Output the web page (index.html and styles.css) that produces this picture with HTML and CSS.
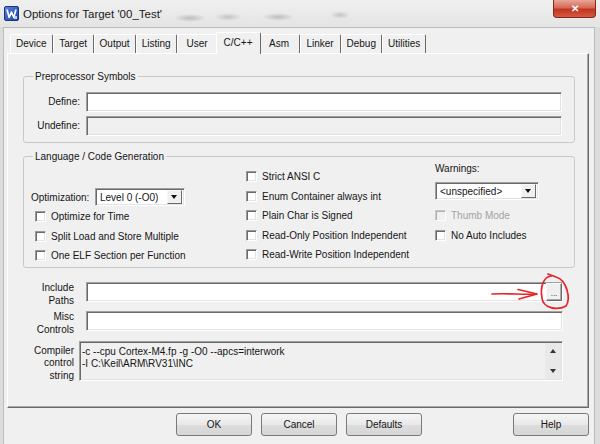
FILE: index.html
```html
<!DOCTYPE html>
<html lang="en">

<head>
    <meta charset="UTF-8">
    <meta name="viewport" content="width=device-width, initial-scale=1.0">
    <title>Options for Target '00_Test'</title>
    <link rel="stylesheet" href="styles.css">
</head>

<body>
    <div class="window">
        <div class="titlebar">
            <svg class="app-icon" viewBox="0 0 15 15">
                <defs>
                    <linearGradient id="ig" x1="0" y1="0" x2="1" y2="1">
                        <stop offset="0" stop-color="#5a86e0" />
                        <stop offset="1" stop-color="#1d3f9e" />
                    </linearGradient>
                </defs>
                <rect x="0.5" y="0.5" width="14" height="14" rx="1.5" fill="url(#ig)" stroke="#1a3580" />
                <path d="M3 3.5 L5.2 11.5 L7.5 6 L9.8 11.5 L12 3.5" fill="none" stroke="#fff" stroke-width="1.6" stroke-linejoin="round" />
                <rect x="10" y="10" width="3" height="3" fill="#bcd0ff" />
            </svg>
            <span class="title">Options for Target '00_Test'</span>
            <div class="close">&#x2715;</div>
        </div>

        <div class="client">
            <div class="tabs">
                <div class="tab">Device</div>
                <div class="tab">Target</div>
                <div class="tab">Output</div>
                <div class="tab">Listing</div>
                <div class="tab">User</div>
                <div class="tab active">C/C++</div>
                <div class="tab">Asm</div>
                <div class="tab">Linker</div>
                <div class="tab">Debug</div>
                <div class="tab">Utilities</div>
            </div>

            <div class="panel">
                <div class="group pre">
                    <span class="group-title">Preprocessor Symbols</span>
                    <div class="sym-grid">
                        <span class="sym-label">Define:</span>
                        <div class="edit"></div>
                        <span class="sym-label">Undefine:</span>
                        <div class="edit disabled"></div>
                    </div>
                </div>

                <div class="group lang">
                    <span class="group-title">Language / Code Generation</span>
                    <div class="lang-grid">
                        <div class="col col1">
                            <div class="opt-row">
                                <span>Optimization:</span>
                                <div class="combo opt"><span>Level 0 (-O0)</span><i class="drop"></i></div>
                            </div>
                            <div class="check"><span class="box"></span>Optimize for Time</div>
                            <div class="check"><span class="box"></span>Split Load and Store Multiple</div>
                            <div class="check"><span class="box"></span>One ELF Section per Function</div>
                        </div>
                        <div class="col col2">
                            <div class="check"><span class="box"></span>Strict ANSI C</div>
                            <div class="check"><span class="box"></span>Enum Container always int</div>
                            <div class="check"><span class="box"></span>Plain Char is Signed</div>
                            <div class="check"><span class="box"></span>Read-Only Position Independent</div>
                            <div class="check"><span class="box"></span>Read-Write Position Independent</div>
                        </div>
                        <div class="col col3">
                            <div class="warn-label">Warnings:</div>
                            <div class="combo warn"><span>&lt;unspecified&gt;</span><i class="drop"></i></div>
                            <div class="check off"><span class="box"></span>Thumb Mode</div>
                            <div class="check"><span class="box"></span>No Auto Includes</div>
                        </div>
                    </div>
                </div>

                <div class="misc-grid">
                    <div class="lbl">Include<br>Paths</div>
                    <div class="edit with-btn"><span class="browse">...</span></div>
                    <div class="lbl">Misc<br>Controls</div>
                    <div class="edit"></div>
                    <div class="lbl compiler">Compiler<br>control<br>string</div>
                    <div class="memo">
                        <div class="memo-text">-c --cpu Cortex-M4.fp -g -O0 --apcs=interwork<br>-I C:\Keil\ARM\RV31\INC</div>
                        <div class="vscroll"><i class="up"></i><i class="down"></i></div>
                    </div>
                </div>
            </div>

            <div class="buttons">
                <button type="button" class="btn">OK</button>
                <button type="button" class="btn">Cancel</button>
                <button type="button" class="btn">Defaults</button>
                <button type="button" class="btn help">Help</button>
            </div>
        </div>

        <!-- red marker drawn over the dialog -->
        <svg class="annotation" viewBox="0 0 100 50">
            <path d="M12 26 C28 25 44 27 56 26" />
            <path d="M38 21.5 L57 26 L39 31" />
            <path d="M71 8 C63 9 60 20 62 30 C63 40 77 43 86 38 C91 31 87 12 76 9 L68 6" />
        </svg>
    </div>
</body>

</html>
```

FILE: styles.css
```css
* {
    box-sizing: border-box;
}

body {
    margin: 0;
    background-color: #dedede;
    font-family: "Liberation Sans", Arial, sans-serif;
    font-size: 10px;
    color: #151515;
}

.window {
    position: relative;
    width: 600px;
    height: 444px;
    overflow: hidden;
    background: #dcdcdc;
}

.titlebar {
    height: 27px;
    display: flex;
    align-items: center;
    padding-left: 4px;
    background:
        radial-gradient(ellipse 16px 4px at 190px 18px, rgba(110, 110, 110, .35), transparent),
        radial-gradient(ellipse 14px 4px at 228px 17px, rgba(110, 110, 110, .3), transparent),
        radial-gradient(ellipse 16px 4px at 278px 17px, rgba(110, 110, 110, .35), transparent),
        radial-gradient(ellipse 10px 4px at 340px 15px, rgba(110, 110, 110, .3), transparent),
        linear-gradient(#f0f0f0, #e4e4e4);
}

.app-icon {
    width: 15px;
    height: 15px;
    margin-right: 4px;
}

.title {
    font-size: 11.5px;
    color: #1a1a1a;
}

.close {
    align-self: flex-start;
    margin-left: auto;
    margin-right: 4px;
    width: 43px;
    height: 18px;
    border: 1px solid #86281b;
    border-top: none;
    border-radius: 0 0 4px 4px;
    background: linear-gradient(#eaa597, #d56a57 45%, #c2341f 55%, #d35a44);
    color: #fff;
    font-size: 10px;
    font-weight: bold;
    line-height: 17px;
    text-align: center;
}

.client {
    margin: 0 5px 0 3px;
    height: 417px;
    background: #f0f0f0;
    border: 1px solid #bcbcbc;
    border-bottom: none;
}

.tabs {
    display: flex;
    align-items: flex-end;
    height: 25px;
    padding-left: 6px;
}

.tab {
    height: 19px;
    min-width: 41px;
    padding: 0 5px;
    line-height: 18px;
    text-align: center;
    border-top: 1px solid #fff;
    border-left: 1px solid #fff;
    border-right: 1px solid #6a6a6a;
    border-radius: 2px 2px 0 0;
    background: #f0f0f0;
}

.tab.active {
    position: relative;
    z-index: 1;
    height: 22px;
    margin: 0 -2px -1px;
    padding: 0 7px;
    line-height: 19px;
}

.panel {
    height: 355px;
    margin: 0 5px 0 3px;
    padding: 0 13px 0 15px;
    border: 1px solid;
    border-color: #fff #6a6a6a #6a6a6a #fff;
    box-shadow: inset -1px -1px 0 #a9a9a9;
}

.group {
    position: relative;
    border: 1px solid #c9c9c9;
    border-radius: 3px;
}

.group-title {
    position: absolute;
    top: -7px;
    left: 9px;
    padding: 0 2px;
    line-height: 13px;
    background: #f0f0f0;
}

.pre {
    margin-top: 22px;
    padding: 15px 12px 6px 0;
}

.sym-grid {
    display: grid;
    grid-template-columns: 56px 1fr;
    grid-template-rows: 20px 20px;
    column-gap: 6px;
    row-gap: 4px;
}

.sym-label {
    line-height: 20px;
    text-align: right;
}

.edit {
    height: 20px;
    background: #fff;
    border: 1px solid;
    border-color: #a0a0a0 #fff #fff #a0a0a0;
    box-shadow: inset 1px 1px 0 #6a6a6a, inset -1px -1px 0 #e3e3e3;
}

.edit.disabled {
    background: #f0f0f0;
}

.lang {
    margin-top: 13px;
    padding: 5px 0 1px 7px;
}

.lang-grid {
    display: grid;
    grid-template-columns: 215px 189px 1fr;
}

.col1 {
    padding-top: 25px;
}

.col1 .check {
    height: 19.5px;
    padding-left: 4px;
}

.col2 {
    padding-top: 5px;
}

.col2 .check {
    height: 19.5px;
}

.opt-row {
    display: flex;
    align-items: center;
    height: 20px;
}

.opt-row span {
    width: 64px;
}

.check {
    display: flex;
    align-items: center;
    height: 20px;
}

.box {
    width: 11px;
    height: 11px;
    margin-right: 5px;
    background: #fff;
    border: 1px solid;
    border-color: #9a9a9a #fff #fff #9a9a9a;
    box-shadow: inset 1px 1px 0 #6a6a6a, inset -1px -1px 0 #e3e3e3;
}

.check.off {
    color: #a3a3a3;
}

.check.off .box {
    background: #f0f0f0;
    border-color: #c8c8c8 #fff #fff #c8c8c8;
    box-shadow: inset 1px 1px 0 #b0b0b0;
}

.combo {
    display: flex;
    align-items: center;
    height: 18px;
    padding: 1px 2px 1px 4px;
    background: #fff;
    border: 1px solid;
    border-color: #a0a0a0 #fff #fff #a0a0a0;
    box-shadow: inset 1px 1px 0 #6a6a6a, inset -1px -1px 0 #e3e3e3;
}

.combo span {
    flex: 1;
}

.combo.opt {
    width: 90px;
}

.combo.warn {
    width: 104px;
    margin-top: 6px;
}

.drop {
    position: relative;
    width: 15px;
    height: 14px;
    background: #f0f0f0;
    border: 1px solid;
    border-color: #f8f8f8 #6a6a6a #6a6a6a #f8f8f8;
}

.drop::after {
    content: "";
    position: absolute;
    left: 3px;
    top: 4px;
    border-left: 3.5px solid transparent;
    border-right: 3.5px solid transparent;
    border-top: 4px solid #111;
}

.warn-label {
    line-height: 14px;
}

.col3 .check {
    height: 20px;
}

.col3 .combo + .check {
    margin-top: 5px;
}

.misc-grid {
    display: grid;
    grid-template-columns: 51px 1fr;
    grid-template-rows: 20px 20px 40px;
    column-gap: 12px;
    row-gap: 9px;
    margin: 14px 12px 0 0;
}

.lbl {
    align-self: start;
    margin-top: -1px;
    line-height: 13px;
    text-align: right;
}

.lbl.compiler {
    margin-top: 5px;
    line-height: 12.5px;
}

.with-btn {
    display: flex;
    justify-content: flex-end;
}

.browse {
    width: 16px;
    height: 18px;
    background: #f0f0f0;
    border: 1px solid;
    border-color: #f8f8f8 #6a6a6a #6a6a6a #f8f8f8;
    box-shadow: inset -1px -1px 0 #a9a9a9;
    font-size: 8px;
    line-height: 19px;
    text-align: center;
}

.memo {
    display: flex;
    height: 40px;
    margin: 1px 0 0 -7px;
    background: #f0f0f0;
    border: 1px solid;
    border-color: #a0a0a0 #fff #fff #a0a0a0;
    box-shadow: inset 1px 1px 0 #6a6a6a, inset -1px -1px 0 #e3e3e3;
}

.memo-text {
    flex: 1;
    padding: 4px 0 0 2px;
    line-height: 12px;
}

.vscroll {
    display: flex;
    flex-direction: column;
    justify-content: space-between;
    align-items: center;
    width: 16px;
    margin: 1px 1px 1px 0;
    padding: 6px 0 6px;
    background: #e9e9e9;
}

.vscroll i {
    width: 0;
    height: 0;
    border-left: 3.5px solid transparent;
    border-right: 3.5px solid transparent;
}

.vscroll .up {
    border-bottom: 4px solid #333;
}

.vscroll .down {
    border-top: 4px solid #333;
}

.buttons {
    display: flex;
    padding: 5px 5px 0 172px;
}

.btn {
    width: 76px;
    height: 23px;
    margin: 0 9px 0 0;
    padding: 0;
    font-family: "Liberation Sans", Arial, sans-serif;
    font-size: 10px;
    color: #151515;
    border: 1px solid #7a7a7a;
    border-radius: 3px;
    background: linear-gradient(#f5f5f5, #e9e9e9 50%, #dddddd 51%, #d6d6d6);
}

.btn.help {
    margin: 0 0 0 auto;
}

.annotation {
    position: absolute;
    left: 480px;
    top: 268px;
    width: 100px;
    height: 50px;
    fill: none;
    stroke: #e5232a;
    stroke-width: 1.7;
    stroke-linecap: round;
    stroke-linejoin: round;
}
```
